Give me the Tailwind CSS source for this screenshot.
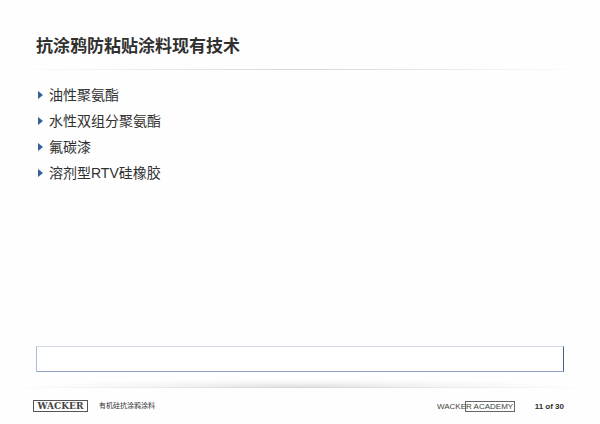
<!DOCTYPE html>
<html lang="zh-CN">
<head>
  <meta charset="utf-8"/>
  <meta content="width=device-width, initial-scale=1" name="viewport"/>
  <title>抗涂鸦防粘贴涂料现有技术</title>
  <script src="https://cdn.jsdelivr.net/npm/@tailwindcss/browser@4"></script>
</head>
<body class="flex min-h-screen flex-col bg-[#fefefe] font-['Liberation_Sans','Noto_Sans_CJK_SC',sans-serif] text-[#303030]">
  <header>
    <h1 class="px-9 pt-[33px] pb-2 text-[17px] leading-7 font-bold">抗涂鸦防粘贴涂料现有技术</h1>
    <div class="mx-2 h-px bg-linear-to-r from-transparent via-[#d6d6d6] to-transparent"></div>
  </header>

  <main class="flex grow flex-col px-9 pt-3">
    <ul class="text-[14px] leading-[26px]">
      <li class="flex items-center gap-1.5">
        <svg class="ml-0.5 h-2 w-[5px] fill-[#355f9c]" viewBox="0 0 5 8"><path d="M0 0L5 4L0 8Z"/></svg>
        油性聚氨酯
      </li>
      <li class="flex items-center gap-1.5">
        <svg class="ml-0.5 h-2 w-[5px] fill-[#355f9c]" viewBox="0 0 5 8"><path d="M0 0L5 4L0 8Z"/></svg>
        水性双组分聚氨酯
      </li>
      <li class="flex items-center gap-1.5">
        <svg class="ml-0.5 h-2 w-[5px] fill-[#355f9c]" viewBox="0 0 5 8"><path d="M0 0L5 4L0 8Z"/></svg>
        氟碳漆
      </li>
      <li class="flex items-center gap-1.5">
        <svg class="ml-0.5 h-2 w-[5px] fill-[#355f9c]" viewBox="0 0 5 8"><path d="M0 0L5 4L0 8Z"/></svg>
        溶剂型RTV硅橡胶
      </li>
    </ul>
    <div class="mt-auto h-[26px] border border-t-[#d3dbea] border-r-[#45608c] border-b-[#8fa5c6] border-l-[#aabbd8] bg-white"></div>
  </main>

  <footer class="pt-[7px]">
    <!-- soft shadow resting on the footer line -->
    <div class="h-2 bg-[radial-gradient(45%_100%_at_50%_100%,#e0e0e0,#f4f4f4_50%,transparent)]"></div>
    <div class="h-px bg-linear-to-r from-transparent via-[#d6d6d6] to-transparent"></div>
    <div class="flex h-9 items-center px-9">
      <svg class="-ml-[3px] h-3 w-[55px]" viewBox="0 0 55 12" role="img" aria-label="WACKER">
        <rect x="0.5" y="0.5" width="54" height="11" fill="none" stroke="#555"/>
        <text x="27.5" y="9" text-anchor="middle" class="fill-[#444] font-['DejaVu_Serif',serif] text-[9px] font-bold">WACKER</text>
      </svg>
      <span class="ml-[11px] text-[7px] leading-3">有机硅抗涂鸦涂料</span>
      <svg class="ml-auto h-3 w-[78px]" viewBox="0 0 78 12" role="img" aria-label="WACKER ACADEMY">
        <rect x="28.5" y="1.5" width="49" height="10" fill="none" stroke="#666"/>
        <text x="0" y="9" class="fill-[#444] font-['Liberation_Sans',sans-serif] text-[8px]">WACKER ACADEMY</text>
      </svg>
      <span class="ml-5 pt-0.5 text-[8px] leading-3 font-bold">11 of 30</span>
    </div>
  </footer>
</body>
</html>
